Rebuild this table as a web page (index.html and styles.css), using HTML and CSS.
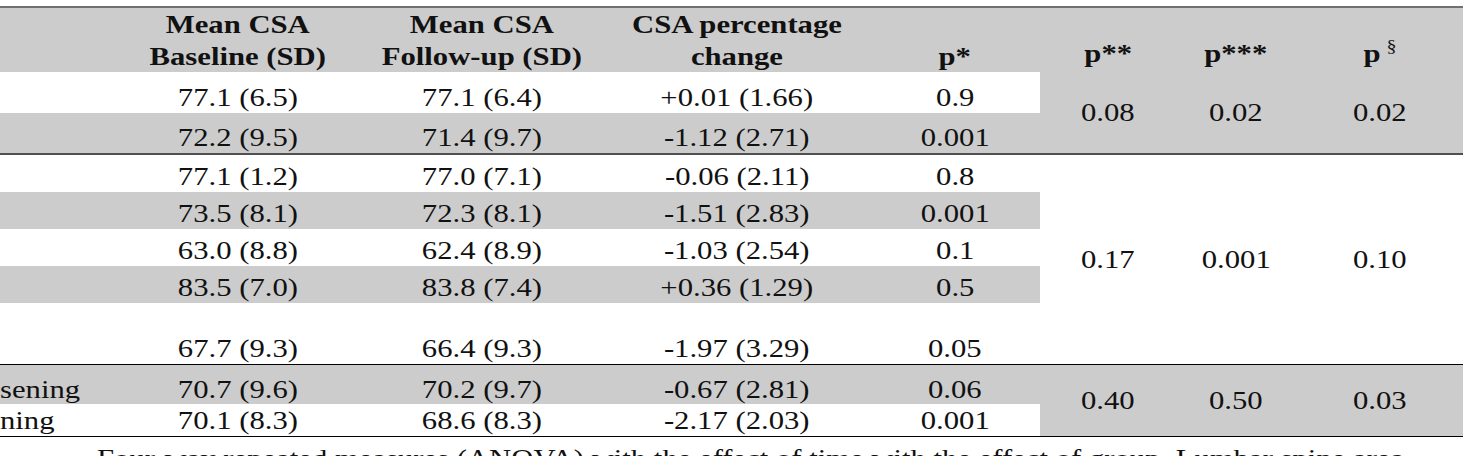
FILE: index.html
```html
<!DOCTYPE html>
<html lang="en">
<head>
<meta charset="utf-8">
<title>CSA table</title>
<link rel="stylesheet" href="styles.css">
</head>
<body>
<div class="page">
  <table class="csa">
    <colgroup>
      <col class="c-lbl"><col class="c-base"><col class="c-fu"><col class="c-pct"><col class="c-p1"><col class="c-p2"><col class="c-p3"><col class="c-p4">
    </colgroup>
    <thead>
      <tr class="head">
        <th class="lbl"></th>
        <th><span class="t">Mean CSA<br>Baseline (SD)</span></th>
        <th><span class="t">Mean CSA<br>Follow-up (SD)</span></th>
        <th><span class="t">CSA percentage<br>change</span></th>
        <th class="bot"><span class="t">p*</span></th>
        <th class="bot up"><span class="t">p**</span></th>
        <th class="bot up"><span class="t">p***</span></th>
        <th class="bot up"><span class="t">p<sup>§</sup></span></th>
      </tr>
    </thead>
    <tbody>
      <tr class="h41 w">
        <td class="lbl"></td>
        <td><span class="t">77.1 (6.5)</span></td>
        <td><span class="t">77.1 (6.4)</span></td>
        <td><span class="t">+0.01 (1.66)</span></td>
        <td><span class="t">0.9</span></td>
        <td class="merged g end2" rowspan="2"><span class="t">0.08</span></td>
        <td class="merged g end2" rowspan="2"><span class="t">0.02</span></td>
        <td class="merged g end2" rowspan="2"><span class="t">0.02</span></td>
      </tr>
      <tr class="h42 g">
        <td class="lbl end2"></td>
        <td class="end2"><span class="t">72.2 (9.5)</span></td>
        <td class="end2"><span class="t">71.4 (9.7)</span></td>
        <td class="end2"><span class="t">-1.12 (2.71)</span></td>
        <td class="end2"><span class="t">0.001</span></td>
      </tr>
    </tbody>
    <tbody>
      <tr class="h37 w">
        <td class="lbl"></td>
        <td><span class="t">77.1 (1.2)</span></td>
        <td><span class="t">77.0 (7.1)</span></td>
        <td><span class="t">-0.06 (2.11)</span></td>
        <td><span class="t">0.8</span></td>
        <td class="merged w end1" rowspan="5"><span class="t">0.17</span></td>
        <td class="merged w end1" rowspan="5"><span class="t">0.001</span></td>
        <td class="merged w end1" rowspan="5"><span class="t">0.10</span></td>
      </tr>
      <tr class="h37 g">
        <td class="lbl"></td>
        <td><span class="t">73.5 (8.1)</span></td>
        <td><span class="t">72.3 (8.1)</span></td>
        <td><span class="t">-1.51 (2.83)</span></td>
        <td><span class="t">0.001</span></td>
      </tr>
      <tr class="h37 w">
        <td class="lbl"></td>
        <td><span class="t">63.0 (8.8)</span></td>
        <td><span class="t">62.4 (8.9)</span></td>
        <td><span class="t">-1.03 (2.54)</span></td>
        <td><span class="t">0.1</span></td>
      </tr>
      <tr class="h37 g">
        <td class="lbl"></td>
        <td><span class="t">83.5 (7.0)</span></td>
        <td><span class="t">83.8 (7.4)</span></td>
        <td><span class="t">+0.36 (1.29)</span></td>
        <td><span class="t">0.5</span></td>
      </tr>
      <tr class="h62 w">
        <td class="lbl end1"></td>
        <td class="end1"><span class="t">67.7 (9.3)</span></td>
        <td class="end1"><span class="t">66.4 (9.3)</span></td>
        <td class="end1"><span class="t">-1.97 (3.29)</span></td>
        <td class="end1"><span class="t">0.05</span></td>
      </tr>
    </tbody>
    <tbody>
      <tr class="h39 g">
        <td class="lbl tight"><span class="t">sening</span></td>
        <td class="tight"><span class="t">70.7 (9.6)</span></td>
        <td class="tight"><span class="t">70.2 (9.7)</span></td>
        <td class="tight"><span class="t">-0.67 (2.81)</span></td>
        <td class="tight"><span class="t">0.06</span></td>
        <td class="merged g end1" rowspan="2"><span class="t">0.40</span></td>
        <td class="merged g end1" rowspan="2"><span class="t">0.50</span></td>
        <td class="merged g end1" rowspan="2"><span class="t">0.03</span></td>
      </tr>
      <tr class="h33 w">
        <td class="lbl end1"><span class="t">ning</span></td>
        <td class="end1"><span class="t">70.1 (8.3)</span></td>
        <td class="end1"><span class="t">68.6 (8.3)</span></td>
        <td class="end1"><span class="t">-2.17 (2.03)</span></td>
        <td class="end1"><span class="t">0.001</span></td>
      </tr>
    </tbody>
  </table>
  <p class="note"><span class="t">Four-way repeated measures (ANOVA) with the effect of time with the effect of group. Lumbar spine area.</span></p>
</div>
</body>
</html>
```

FILE: styles.css
```css
html, body {
  margin: 0;
  padding: 0;
  background: #ffffff;
}

.page {
  width: 1465px;
  height: 456px;
  overflow: hidden;
  padding-top: 6px;
  box-sizing: border-box;
  font-family: "Liberation Serif", "Times New Roman", serif;
  color: #111111;
}

/* the source text is rendered horizontally stretched */
.t {
  display: inline-block;
  transform: scaleX(1.18);
  transform-origin: 50% 50%;
}

.csa {
  width: 1463px;
  table-layout: fixed;
  border-collapse: separate;
  border-spacing: 0;
  font-size: 26px;
}

.c-lbl  { width: 116px; }
.c-base { width: 244px; }
.c-fu   { width: 244px; }
.c-pct  { width: 266px; }
.c-p1   { width: 170px; }
.c-p2   { width: 136px; }
.c-p3   { width: 120px; }
.c-p4   { width: 167px; }

.head { height: 66px; }

.csa th {
  background: #cccccc;
  border-top: 2px solid #707070;
  font-weight: bold;
  line-height: 31.5px;
  padding: 1px 0 0;
  vertical-align: top;
  text-align: center;
  white-space: nowrap;
}

.csa th.bot {
  vertical-align: bottom;
  padding: 0;
}

.csa th.up {
  padding-bottom: 3px;
}

.csa sup {
  font-weight: normal;
  font-size: 17px;
  vertical-align: 10px;
  line-height: 0;
  margin-left: 5px;
}

.csa td {
  padding: 0 0 1px;
  line-height: 28px;
  vertical-align: bottom;
  text-align: center;
  white-space: nowrap;
}

.csa td.lbl {
  text-align: left;
  overflow: hidden;
}

.csa td.lbl .t,
.note .t {
  transform-origin: 0 50%;
}

.csa td.tight {
  padding-bottom: 0;
}

.csa td.merged {
  vertical-align: middle;
  padding: 0;
}

.w > td, td.w { background: #ffffff; }
.g > td, td.g { background: #cccccc; }

.h41 { height: 41px; }
.h42 { height: 42px; }
.h37 { height: 37px; }
.h62 { height: 62px; }
.h39 { height: 39px; }
.h33 { height: 33px; }

.csa td.end2 { border-bottom: 2px solid #505050; }
.csa td.end1 { border-bottom: 1px solid #000000; }

.note {
  margin: 7px 0 0;
  padding-left: 97px;
  font-size: 26px;
  line-height: 30px;
  white-space: nowrap;
}
```
